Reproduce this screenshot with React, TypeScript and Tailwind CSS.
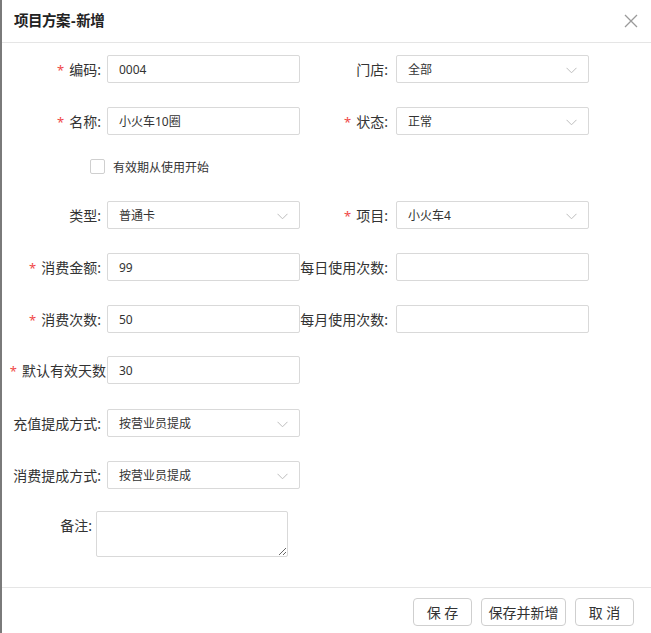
import React from 'react';

const Chevron: React.FC = () => (
  <svg width="11" height="7" viewBox="0 0 11 7" className="absolute right-[11px] top-[11px]">
    <polyline points="0.5,0.8 5.5,5.8 10.5,0.8" fill="none" stroke="#bdbdbd" strokeWidth="1" />
  </svg>
);

const Star: React.FC = () => <span className="text-[#f04848] text-[13px] mr-[5px] relative top-[1px]">*</span>;

type FieldProps = { label: string; value?: string; required?: boolean; select?: boolean; labelW: string; pr?: string };

const Field: React.FC<FieldProps> = ({ label, value, required, select, labelW, pr = 'pr-[6px]' }) => (
  <div className="flex items-center h-[28px]">
    <div className={`${labelW} ${pr} flex items-center justify-end whitespace-nowrap text-[14px] text-[#333] pt-[1px]`}>
      {required && <Star />}
      {label}
    </div>
    <div className="relative w-[193px] h-[28px] border border-[#d9d9d9] rounded-[2px] bg-white flex items-center pl-[11px] pt-[2px] text-[12px] text-[#333]">
      {value}
      {select && <Chevron />}
    </div>
  </div>
);

const App: React.FC = () => {
  return (
    <div className="w-[651px] h-[633px] bg-white border-l-2 border-[#7a7a7a] flex flex-col font-['Noto_Sans','Noto_Sans_CJK_SC',sans-serif]">
      {/* header */}
      <div className="h-[43px] border-b border-[#e5e5e5] flex items-center justify-between pl-[12px] pr-[13px]">
        <h1 className="text-[14.5px] font-bold text-[#222] tracking-[-0.5px]">
          项目方案<span className="mx-[1px]">-</span>新增
        </h1>
        <svg width="14" height="14" viewBox="0 0 14 14">
          <path d="M1 1 L13 13 M13 1 L1 13" stroke="#9a9a9a" strokeWidth="1.3" />
        </svg>
      </div>

      {/* body */}
      <div className="flex-1 flex flex-col pt-[12px]">
        <div className="flex">
          <Field labelW="w-[105px]" label="编码:" value="0004" required />
          <Field labelW="w-[96px]" pr="pr-[8px]" label="门店:" value="全部" select />
        </div>
        <div className="flex mt-[24px]">
          <Field labelW="w-[105px]" label="名称:" value="小火车10圈" required />
          <Field labelW="w-[96px]" pr="pr-[8px]" label="状态:" value="正常" required select />
        </div>
        <div className="flex items-center mt-[24px] h-[15px] pl-[88px]">
          <div className="w-[15px] h-[15px] border border-[#cfcfcf] rounded-[2px] bg-white" />
          <span className="ml-[8px] text-[12px] text-[#333] pt-[2px]">有效期从使用开始</span>
        </div>
        <div className="flex mt-[27px]">
          <Field labelW="w-[105px]" label="类型:" value="普通卡" select />
          <Field labelW="w-[96px]" pr="pr-[8px]" label="项目:" value="小火车4" required select />
        </div>
        <div className="flex mt-[24px]">
          <Field labelW="w-[105px]" label="消费金额:" value="99" required />
          <Field labelW="w-[96px]" pr="pr-[8px]" label="每日使用次数:" />
        </div>
        <div className="flex mt-[24px]">
          <Field labelW="w-[105px]" label="消费次数:" value="50" required />
          <Field labelW="w-[96px]" pr="pr-[8px]" label="每月使用次数:" />
        </div>
        <div className="flex mt-[23px]">
          <Field labelW="w-[105px]" pr="pr-[1px]" label="默认有效天数" value="30" required />
        </div>
        <div className="flex mt-[25px]">
          <Field labelW="w-[105px]" label="充值提成方式:" value="按营业员提成" select />
        </div>
        <div className="flex mt-[24px]">
          <Field labelW="w-[105px]" label="消费提成方式:" value="按营业员提成" select />
        </div>
        <div className="flex mt-[22px]">
          <div className="w-[94px] pr-[4px] h-[28px] flex items-center justify-end text-[14px] text-[#333] pt-[1px]">备注:</div>
          <textarea className="w-[192px] h-[46px] border border-[#d9d9d9] rounded-[2px] outline-none" />
        </div>
      </div>

      {/* footer */}
      <div className="h-[46px] border-t border-[#e5e5e5] flex items-start justify-end gap-[9px] pt-[10px] pr-[17px]">
        <button className="w-[59px] h-[28px] border border-[#cfcfcf] rounded-[4px] bg-white text-[14px] text-[#333]">保 存</button>
        <button className="w-[85px] h-[28px] border border-[#cfcfcf] rounded-[4px] bg-white text-[14px] text-[#333]">保存并新增</button>
        <button className="w-[59px] h-[28px] border border-[#cfcfcf] rounded-[4px] bg-white text-[14px] text-[#333]">取 消</button>
      </div>
    </div>
  );
};

export default App;
